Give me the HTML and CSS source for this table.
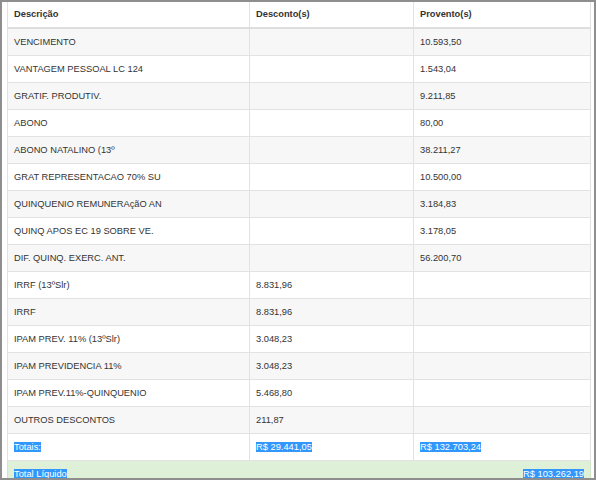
FILE: index.html
```html
<!DOCTYPE html>
<html lang="pt">
<head>
<meta charset="utf-8">
<link rel="stylesheet" href="styles.css">
</head>
<body>
<div class="frame">
  <table class="grid">
    <colgroup>
      <col class="c1"><col class="c2"><col class="c3">
    </colgroup>
    <thead>
      <tr><th>Descrição</th><th>Desconto(s)</th><th>Provento(s)</th></tr>
    </thead>
    <tbody>
      <tr><td>VENCIMENTO</td><td></td><td>10.593,50</td></tr>
      <tr><td>VANTAGEM PESSOAL LC 124</td><td></td><td>1.543,04</td></tr>
      <tr><td>GRATIF. PRODUTIV.</td><td></td><td>9.211,85</td></tr>
      <tr><td>ABONO</td><td></td><td>80,00</td></tr>
      <tr><td>ABONO NATALINO (13º</td><td></td><td>38.211,27</td></tr>
      <tr><td>GRAT REPRESENTACAO 70% SU</td><td></td><td>10.500,00</td></tr>
      <tr><td>QUINQUENIO REMUNERAçãO AN</td><td></td><td>3.184,83</td></tr>
      <tr><td>QUINQ APOS EC 19 SOBRE VE.</td><td></td><td>3.178,05</td></tr>
      <tr><td>DIF. QUINQ. EXERC. ANT.</td><td></td><td>56.200,70</td></tr>
      <tr><td>IRRF (13ºSlr)</td><td>8.831,96</td><td></td></tr>
      <tr><td>IRRF</td><td>8.831,96</td><td></td></tr>
      <tr><td>IPAM PREV. 11% (13ºSlr)</td><td>3.048,23</td><td></td></tr>
      <tr><td>IPAM PREVIDENCIA 11%</td><td>3.048,23</td><td></td></tr>
      <tr><td>IPAM PREV.11%-QUINQUENIO</td><td>5.468,80</td><td></td></tr>
      <tr><td>OUTROS DESCONTOS</td><td>211,87</td><td></td></tr>
      <tr class="totals"><td><span class="sel">Totais:</span></td><td><span class="sel">R$ 29.441,05</span></td><td><span class="sel">R$ 132.703,24</span></td></tr>
      <tr class="net"><td colspan="3"><div class="net-line"><span class="sel">Total Líquido</span><span class="sel">R$ 103.262,19</span></div></td></tr>
    </tbody>
  </table>
</div>
</body>
</html>
```
FILE: styles.css
```css
html, body {
  margin: 0;
  padding: 0;
  background: #fff;
}
.frame {
  width: 596px;
  height: 480px;
  box-sizing: border-box;
  border: 2px solid #8e8e8e;
  padding: 0 4px 0 5px;
  overflow: hidden;
  font-family: "Liberation Sans", Arial, sans-serif;
  font-size: 9.3px;
  color: #333;
}
.grid {
  width: 583px;
  border-collapse: collapse;
  table-layout: fixed;
  margin-top: -2px;
}
.c1 { width: 242px; }
.c2 { width: 164px; }
.c3 { width: 177px; }
.grid th, .grid td {
  border: 1px solid #e2e2e2;
  padding: 0 6px;
  text-align: left;
  vertical-align: middle;
  white-space: nowrap;
}
.grid th {
  height: 27px;
  font-weight: bold;
  border-bottom: 2px solid #dedede;
  border-top: none;
}
.grid td {
  height: 26px;
}
.grid tbody tr:nth-child(odd) td {
  background: #f7f7f7;
}
.grid tbody tr.totals td {
  background: #fff;
}
.grid tbody tr.net td {
  background: #dff0d8;
  border-color: #d0e6c6;
  padding: 0 6px;
}
.net-line {
  display: flex;
  justify-content: space-between;
  align-items: center;
}
.sel {
  background: #3297fd;
  color: #fff;
}
```
